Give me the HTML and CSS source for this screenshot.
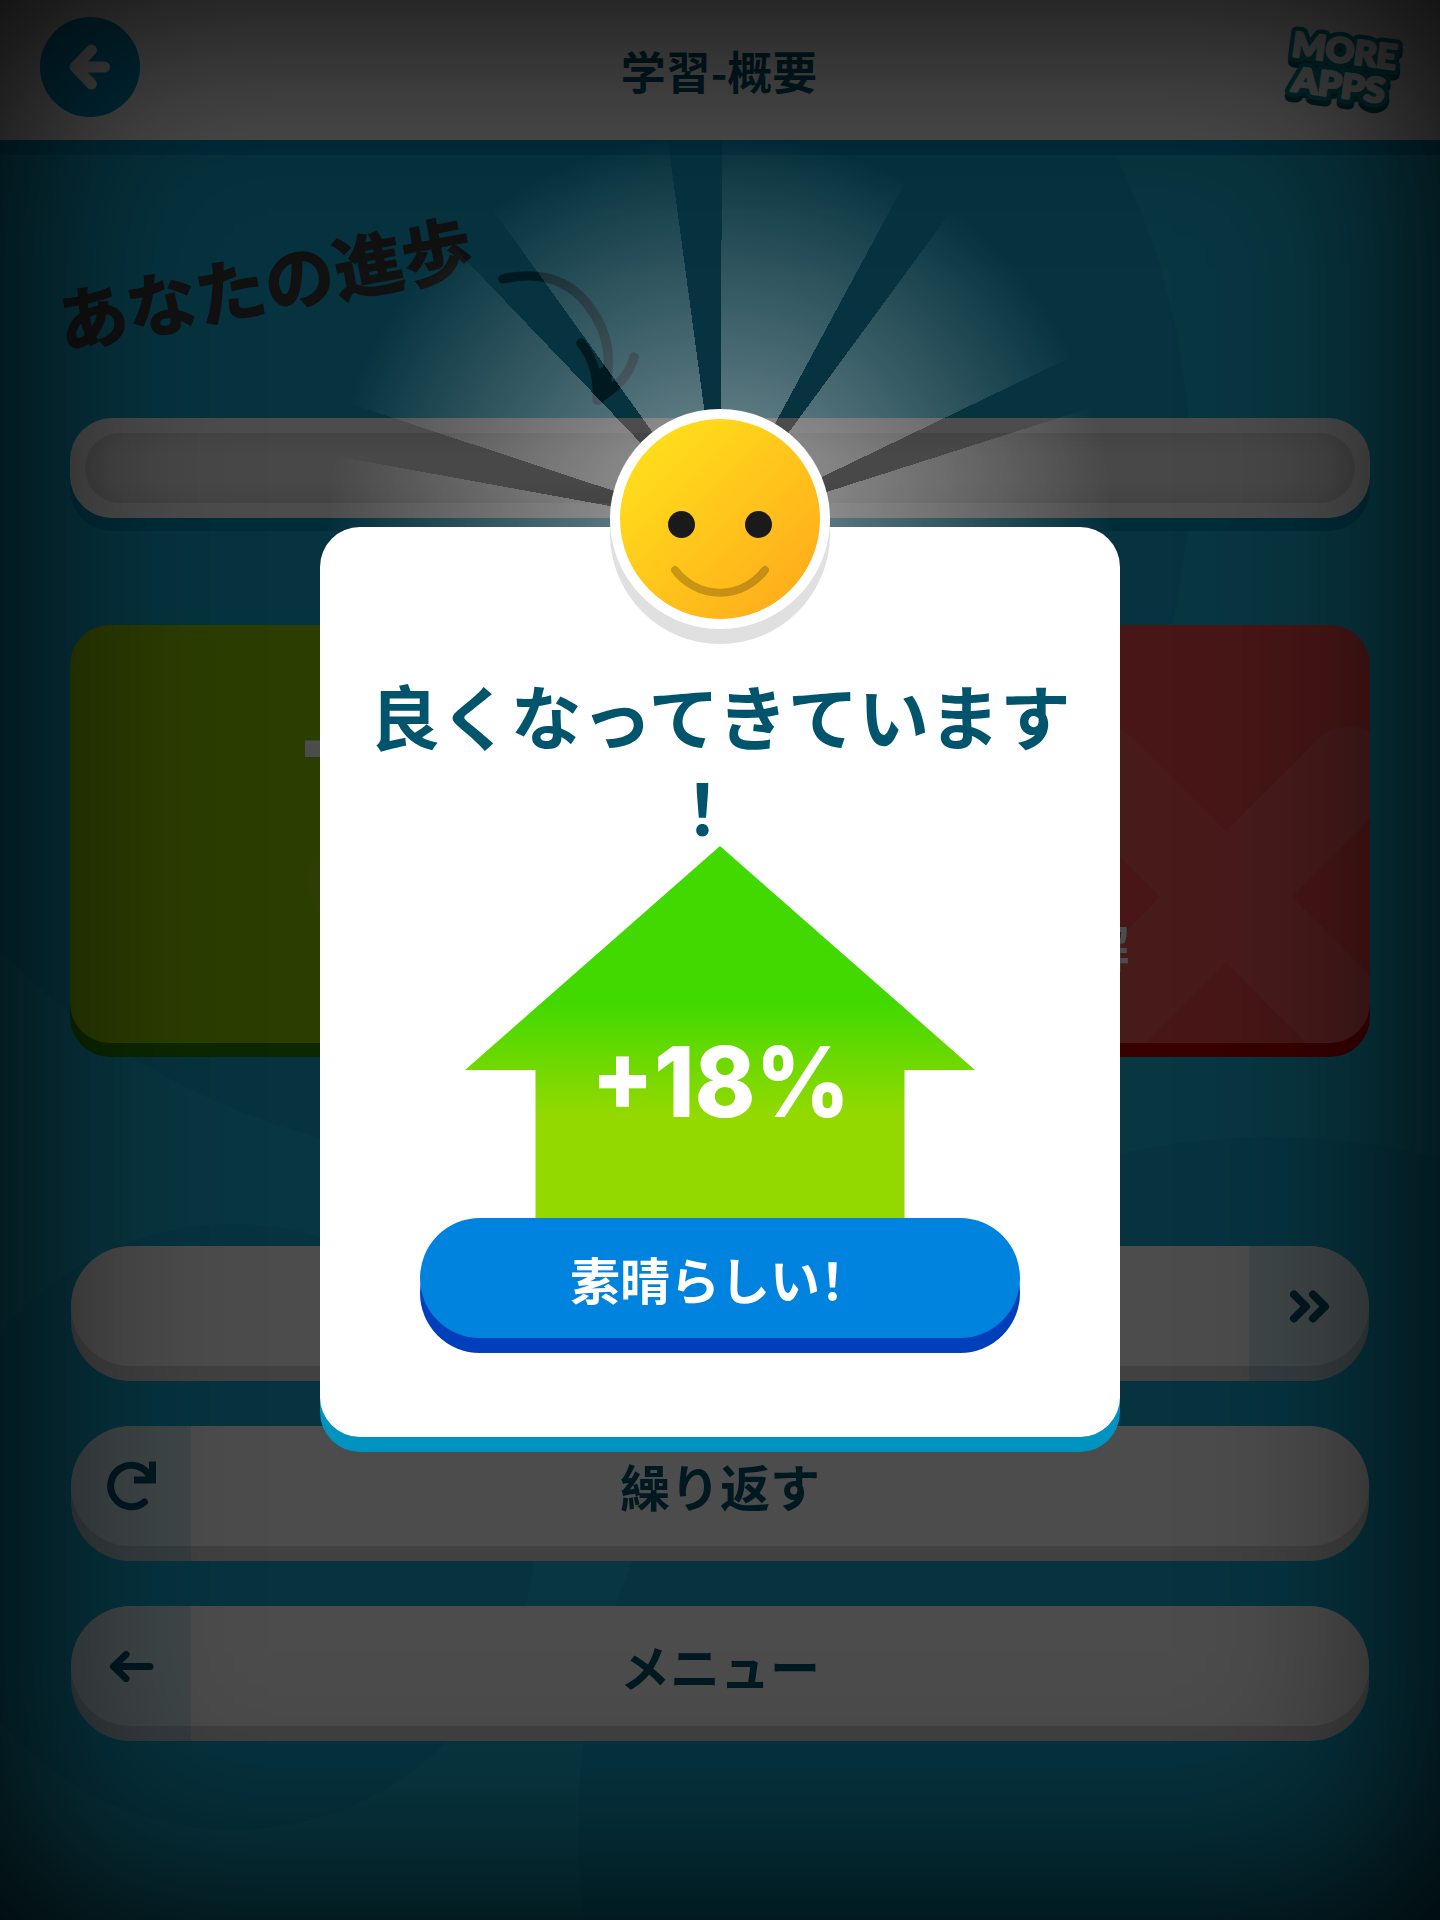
FILE: index.html
```html
<!DOCTYPE html>
<html lang="en">
<head>
    <meta charset="UTF-8">
    <meta name="viewport" content="width=device-width, initial-scale=1.0">
    <title>学習-概要</title>
    <link rel="stylesheet" href="styles.css">
</head>
<body>
    <div class="page">
        <svg class="page-bg" viewBox="0 0 1440 1920">
            <circle cx="497" cy="468" r="693"/>
            <circle cx="233" cy="1527" r="303"/>
            <circle cx="1271" cy="1830" r="693"/>
        </svg>

        <header class="header">
            <div class="back-button">
                <svg width="100" height="100" viewBox="0 0 100 100">
                    <path d="M51.500 33 L35 50 L51.500 67 M40 50 H64.500" class="back-arrow"/>
                </svg>
            </div>
            <h1 class="header-title">学習-概要</h1>
            <svg class="more-apps" width="130" height="104" viewBox="0 0 130 104">
                <g class="logo-depth" transform="translate(0 5.500)">
                    <text x="13" y="38" textLength="105" lengthAdjust="spacingAndGlyphs" transform="rotate(7.5 13 38)">MORE</text>
                    <text x="13" y="73" textLength="93" lengthAdjust="spacingAndGlyphs" transform="rotate(7.5 13 73)">APPS</text>
                </g>
                <g class="logo-outline">
                    <text x="13" y="38" textLength="105" lengthAdjust="spacingAndGlyphs" transform="rotate(7.5 13 38)">MORE</text>
                    <text x="13" y="73" textLength="93" lengthAdjust="spacingAndGlyphs" transform="rotate(7.5 13 73)">APPS</text>
                </g>
                <g class="logo-face">
                    <text x="13" y="38" textLength="105" lengthAdjust="spacingAndGlyphs" transform="rotate(7.5 13 38)">MORE</text>
                    <text x="13" y="73" textLength="93" lengthAdjust="spacingAndGlyphs" transform="rotate(7.5 13 73)">APPS</text>
                </g>
            </svg>
        </header>

        <main class="content">
            <div class="progress-heading">
                <h2 class="progress-title">あなたの進歩</h2>
                <svg class="curved-arrow" width="150" height="140" viewBox="0 0 150 140">
                    <path d="M8 14 C42 6 72 13 93 40 C115 68 120 103 104 135 M86 78 C97 92 104 112 102 135 M139 92 C134 112 121 122 102 135"/>
                    <path class="curved-arrow-tip" d="M101 105 L113 100 L117 118 L103 132 Z"/>
                </svg>
            </div>

            <div class="progress-bar"><div class="progress-track"></div></div>

            <div class="cards">
                <div class="card card-right">
                    <svg class="card-mark" viewBox="0 0 635 418">
                        <path d="M283 257 L370 330 L520 160"/>
                    </svg>
                    <div class="card-number">—</div>
                </div>
                <div class="card card-wrong">
                    <svg class="card-mark" viewBox="0 0 635 418">
                        <path d="M367 148 L615 396 M615 148 L367 396"/>
                    </svg>
                    <div class="card-label">不正解</div>
                </div>
            </div>

            <nav class="menu">
                <div class="menu-button">
                    <span class="menu-icon menu-icon-right">
                        <svg width="60" height="60" viewBox="0 0 60 60">
                            <path class="chevrons" d="M15 18.500 L27 30.500 L15 42.500 M34 18.500 L46 30.500 L34 42.500"/>
                        </svg>
                    </span>
                </div>
                <div class="menu-button">
                    <span class="menu-icon">
                        <svg width="60" height="60" viewBox="0 0 60 60">
                            <path d="M43.500 46 A20.700 20.700 0 1 1 49 21"/>
                            <path class="icon-fill" d="M48 5.500 H55 V27.500 H33 V20.500 H44 L48 17 Z"/>
                        </svg>
                    </span>
                    繰り返す
                </div>
                <div class="menu-button">
                    <span class="menu-icon">
                        <svg width="60" height="60" viewBox="0 0 60 60">
                            <path d="M25 18.500 L12.500 30.500 L25 42.500 M14 30.500 H49"/>
                        </svg>
                    </span>
                    メニュー
                </div>
            </nav>
        </main>
    </div>

    <div class="overlay">
        <div class="rays"></div>
        <div class="modal">
            <svg class="smiley" width="220" height="236" viewBox="0 0 220 236">
                <defs>
                    <linearGradient id="face" x1="0" y1="0" x2="1" y2="1">
                        <stop offset="0.1" stop-color="#ffe01b"/>
                        <stop offset="0.9" stop-color="#ffac1b"/>
                    </linearGradient>
                </defs>
                <circle cx="110" cy="125" r="110" fill="#e0e0e0"/>
                <circle cx="110" cy="110" r="110" fill="#fff"/>
                <circle cx="110" cy="110" r="100" fill="url(#face)"/>
                <circle cx="71.500" cy="115.500" r="13.500" fill="#1a1a1a"/>
                <circle cx="148.500" cy="115.500" r="13.500" fill="#1a1a1a"/>
                <path class="smile" d="M65 161 A56 56 0 0 0 155 161"/>
            </svg>
            <h2 class="modal-title">良くなってきています！</h2>
            <div class="arrow-up">
                <svg class="arrow-shape" width="510" height="372" viewBox="0 0 510 372">
                    <defs>
                        <linearGradient id="up" x1="0" y1="0" x2="0" y2="1">
                            <stop offset="0.42" stop-color="#41d900"/>
                            <stop offset="0.72" stop-color="#93d900"/>
                        </linearGradient>
                    </defs>
                    <path d="M255 0 L510 224 H439.500 V372 H70.500 V224 H0 Z" fill="url(#up)"/>
                    <text x="126" y="271" textLength="259" lengthAdjust="spacingAndGlyphs" class="arrow-value">+18%</text>
                </svg>
            </div>
            <div class="modal-button">素晴らしい！</div>
        </div>
    </div>
</body>
</html>
```

FILE: styles.css
```css
* {
    box-sizing: border-box;
}

body {
    margin: 0;
    width: 1440px;
    height: 1920px;
    overflow: hidden;
    position: relative;
    font-family: "Noto Sans CJK SC", sans-serif;
    font-weight: bold;
    color: #00546b;
    background: #1bb6da;
}

h1, h2 {
    margin: 0;
    font-weight: bold;
}

svg {
    display: block;
}

.page {
    height: 1920px;
}

.page-bg {
    position: absolute;
    inset: 0;
    fill: #16acd3;
}

/* header */
.header {
    position: relative;
    display: flex;
    align-items: center;
    justify-content: space-between;
    height: 140px;
    padding: 0 32px 0 40px;
    background: #fff;
    box-shadow: 0 15px 0 #0093c1;
}

.back-button {
    width: 100px;
    height: 100px;
    margin-top: -6px;
    border-radius: 50%;
    background: #0097c9;
}

.back-arrow {
    fill: none;
    stroke: #fff;
    stroke-width: 11;
    stroke-linecap: round;
    stroke-linejoin: round;
}

.header-title {
    font-size: 45px;
    line-height: 66px;
    padding: 2px 0 0 20px;
}

.more-apps {
    font-family: Lato, sans-serif;
    font-weight: 900;
    font-size: 34px;
}

.logo-depth {
    fill: #005f68;
    stroke: #005f68;
    stroke-width: 11;
    stroke-linejoin: round;
}

.logo-outline {
    fill: #008f9e;
    stroke: #008f9e;
    stroke-width: 11;
    stroke-linejoin: round;
}

.logo-face {
    fill: #fff;
    stroke: #fff;
    stroke-width: 2.5;
    stroke-linejoin: round;
}

/* progress */
.content {
    position: relative;
    padding: 0 70px;
}

.progress-heading {
    display: flex;
    height: 278px;
    align-items: flex-start;
}

.progress-title {
    font-size: 70px;
    line-height: 100px;
    width: 420px;
    margin: 91px 0 0 -16px;
    color: #3a3a3a;
    -webkit-text-stroke: 1.5px #3a3a3a;
    transform: rotate(-10.700deg);
    white-space: nowrap;
}

.curved-arrow {
    margin: 125px 0 0 21px;
    fill: none;
    stroke: #00546b;
    stroke-width: 9.500;
    stroke-linecap: round;
    stroke-linejoin: round;
}

.curved-arrow-tip {
    fill: #00546b;
    stroke: none;
}

.progress-bar {
    height: 100px;
    padding: 15px;
    border-radius: 42px;
    background: #fff;
    box-shadow: 0 13px 0 #0093c1;
}

.progress-track {
    height: 70px;
    border-radius: 35px;
    background: #f2f2f2;
    box-shadow: inset 0 0 30px rgba(0, 0, 0, 0.13);
}

/* cards */
.cards {
    display: flex;
    gap: 30px;
    margin-top: 107px;
}

.card {
    position: relative;
    flex: 1;
    display: flex;
    flex-direction: column;
    align-items: center;
    height: 418px;
    border-radius: 40px;
    color: #fff;
}

.card-right {
    background: #93cb00;
    box-shadow: 0 14px 0 #2b8500;
    justify-content: flex-start;
    padding-top: 29px;
}

.card-wrong {
    background: #f04b4b;
    box-shadow: 0 14px 0 #c00000;
    justify-content: flex-end;
    padding-bottom: 62px;
}

.card-mark {
    position: absolute;
    inset: 0;
    border-radius: 40px;
    fill: none;
    stroke: rgba(255, 255, 255, 0.09);
    stroke-width: 93;
    stroke-linecap: round;
    stroke-linejoin: round;
}

.card-right .card-mark {
    stroke: rgba(255, 255, 255, 0.04);
}

.card-number {
    font-family: "Liberation Sans", sans-serif;
    font-size: 165px;
    line-height: 165px;
}

.card-label {
    position: relative;
    font-size: 50px;
    line-height: 72px;
    padding-left: 4px;
}

/* menu */
.menu {
    display: flex;
    flex-direction: column;
    gap: 45px;
    margin: 203px 1px 0;
}

.menu-button {
    position: relative;
    z-index: 0;
    display: flex;
    align-items: center;
    justify-content: center;
    height: 135px;
    padding-bottom: 17px;
    border-radius: 60px;
    overflow: hidden;
    font-size: 50px;
    background: #d9d9d9;
}

/* top face of the pill */
.menu-button::before {
    content: "";
    position: absolute;
    inset: 0;
    bottom: 15px;
    z-index: -1;
    border-radius: 60px;
    background: #fff;
}

.menu-icon {
    position: absolute;
    left: 0;
    top: 0;
    bottom: 0;
    width: 120px;
    display: flex;
    align-items: center;
    justify-content: center;
    padding-bottom: 15px;
    background: rgba(0, 147, 193, 0.16);
}

.menu-icon-right {
    left: auto;
    right: 0;
}

.menu-icon svg {
    fill: none;
    stroke: #00546b;
    stroke-width: 7;
    stroke-linecap: round;
    stroke-linejoin: round;
}

.menu-icon .chevrons {
    stroke-width: 8;
}

.menu-icon .icon-fill {
    fill: #00546b;
    stroke: none;
}

/* popup */
.overlay {
    position: absolute;
    inset: 0;
    z-index: 10;
    display: flex;
    justify-content: center;
    align-items: flex-start;
    padding-top: 527px;
    background: rgba(0, 0, 0, 0.7);
    box-shadow: inset 0 0 225px #000;
}

.rays {
    position: absolute;
    left: 325px;
    top: 131px;
    width: 790px;
    height: 790px;
    background: repeating-conic-gradient(from 0.300deg, #fff 0deg 28deg, transparent 28deg 36deg);
    -webkit-mask-image: radial-gradient(closest-side, rgba(0, 0, 0, 0.48), transparent);
    mask-image: radial-gradient(closest-side, rgba(0, 0, 0, 0.48), transparent);
}

.modal {
    position: relative;
    display: flex;
    flex-direction: column;
    align-items: center;
    width: 800px;
    height: 910px;
    padding: 142px 40px 0;
    border-radius: 40px;
    background: #fff;
    box-shadow: 0 15px 0 #0093c1;
}

.smiley {
    position: absolute;
    top: -118px;
    left: 290px;
}

.smile {
    fill: none;
    stroke: rgba(0, 0, 0, 0.22);
    stroke-width: 8;
    stroke-linecap: round;
}

.modal-title {
    width: 712px;
    height: 177px;
    font-size: 70.700px;
    line-height: 91px;
    text-align: center;
    word-break: break-all;
    line-break: anywhere;
}

.arrow-value {
    font-family: Inter, sans-serif;
    font-weight: 800;
    font-size: 98px;
    fill: #fff;
}

.modal-button {
    display: flex;
    align-items: center;
    justify-content: center;
    width: 600px;
    height: 120px;
    border-radius: 60px;
    font-size: 50px;
    color: #fff;
    background: #0083df;
    box-shadow: 0 15px 0 #003fbc;
}
```
